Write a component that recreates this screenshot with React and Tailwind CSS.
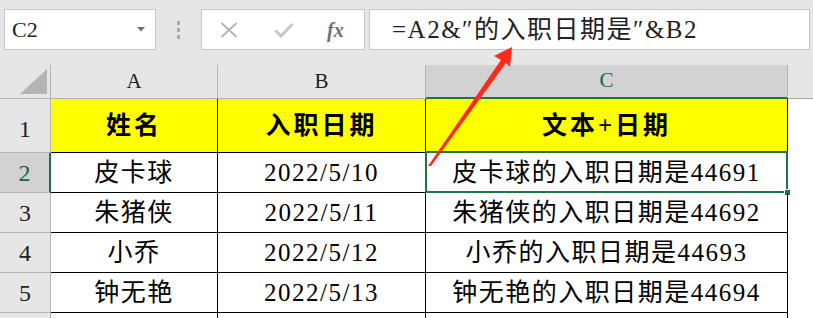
import React from 'react';

const serif = "font-[family-name:'Liberation_Serif','Noto_Sans_CJK_SC',serif]";

const rows = [
  { n: '2', name: '皮卡球', date: '2022/5/10', text: '皮卡球的入职日期是44691', active: true },
  { n: '3', name: '朱猪侠', date: '2022/5/11', text: '朱猪侠的入职日期是44692' },
  { n: '4', name: '小乔', date: '2022/5/12', text: '小乔的入职日期是44693' },
  { n: '5', name: '钟无艳', date: '2022/5/13', text: '钟无艳的入职日期是44694' },
];

const FormulaBar = () => (
  <div className="h-[65px] flex items-start pt-[9px] bg-[#e6e6e6]">
    {/* Name box */}
    <div className="ml-[4px] w-[152px] h-[41px] bg-white border border-[#c6c6c6] flex items-center justify-between pl-[7px] pr-[10px]">
      <span className="text-[22px] text-[#222] leading-none">C2</span>
      <svg width="8" height="5" viewBox="0 0 8 5">
        <path d="M0 0h8L4 4.5z" fill="#707070" />
      </svg>
    </div>
    {/* grip dots */}
    <div className="w-[45px] h-[41px] flex flex-col items-center justify-center gap-[3px]">
      <span className="w-[3px] h-[4px] bg-[#ababab]" />
      <span className="w-[3px] h-[4px] bg-[#ababab]" />
      <span className="w-[3px] h-[4px] bg-[#ababab]" />
    </div>
    {/* cancel / enter / fx */}
    <div className="w-[164px] h-[41px] bg-white border border-[#c6c6c6] flex items-center">
      <svg className="ml-[18px]" width="18" height="16" viewBox="0 0 18 16">
        <path d="M1.5 1L16.5 15M16.5 1L1.5 15" stroke="#b4b4b4" strokeWidth="1.8" />
      </svg>
      <svg className="ml-[36px]" width="20" height="16" viewBox="0 0 20 16">
        <path d="M1.5 8.5L7 14L18.5 2" stroke="#c8c8c8" strokeWidth="3" fill="none" />
      </svg>
      <span className="ml-[33px] italic font-bold text-[20px] text-[#707070] leading-none">fx</span>
    </div>
    {/* formula */}
    <div className="ml-[4px] w-[441px] h-[41px] bg-white border border-[#c6c6c6] flex items-center pl-[22px]">
      <span className="text-[25px] tracking-[1.5px] text-[#222] leading-none">=A2&amp;″的入职日期是″&amp;B2</span>
    </div>
  </div>
);

const App = () => (
  <div className={`relative w-[813px] h-[318px] overflow-hidden bg-white ${serif}`}>
    <FormulaBar />

    {/* column headers */}
    <div className="flex h-[34px] bg-[#e6e6e6]">
      <div className="w-[51px] border-r border-b border-[#b4b4b4] relative">
        <svg className="absolute right-[3px] bottom-[4px]" width="27" height="25" viewBox="0 0 27 25">
          <path d="M27 0V25H0z" fill="#b4b4b4" />
        </svg>
      </div>
      <div className="w-[167px] border-r border-b border-[#b4b4b4] flex items-center justify-center text-[21px] text-[#222]">A</div>
      <div className="w-[208px] border-r border-b border-[#b4b4b4] flex items-center justify-center text-[21px] text-[#222]">B</div>
      <div className="w-[362px] bg-[#d2d2d2] border-r border-[#b4b4b4] border-b-2 border-b-[#217346] flex items-center justify-center text-[21px] text-[#1f5f52]">C</div>
      <div className="flex-1 border-b border-[#a6a6a6]" />
    </div>

    {/* row 1: headers */}
    <div className="flex h-[54px]">
      <div className="w-[51px] bg-[#e6e6e6] border-r border-b border-[#b4b4b4] flex items-end justify-center pb-[5px] text-[24px] text-[#222]">1</div>
      <div className="w-[167px] bg-[#ffff00] border-r border-b border-black flex items-center justify-center text-[25px] font-bold tracking-[3px] text-black">姓名</div>
      <div className="w-[208px] bg-[#ffff00] border-r border-b border-black flex items-center justify-center text-[25px] font-bold tracking-[3px] text-black">入职日期</div>
      <div className="w-[362px] bg-[#ffff00] border-r border-black flex items-center justify-center text-[25px] font-bold tracking-[3px] text-black">文本+日期</div>
      <div className="flex-1" />
    </div>

    {rows.map((r) => (
      <div key={r.n} className="flex h-[40px]">
        <div
          className={
            r.active
              ? 'w-[51px] bg-[#d2d2d2] border-r-2 border-r-[#217346] border-b border-b-[#b4b4b4] flex items-center justify-center text-[24px] text-[#1f5f52]'
              : 'w-[51px] bg-[#e6e6e6] border-r border-b border-[#b4b4b4] flex items-center justify-center text-[24px] text-[#222]'
          }
        >
          {r.n}
        </div>
        <div className="w-[167px] border-r border-b border-black flex items-center justify-center text-[25px] tracking-[1.5px] text-black">{r.name}</div>
        <div className="w-[208px] border-r border-b border-black flex items-center justify-center text-[25px] tracking-[1.5px] text-black">{r.date}</div>
        <div className="relative w-[362px] border-r border-b border-black flex items-center justify-center text-[25px] tracking-[1.5px] text-black whitespace-nowrap">
          {r.text}
          {r.active && (
            <div className="absolute -left-[1px] -top-[2px] -right-[1px] -bottom-[1px] border-2 border-[#217346]">
              <span className="absolute -right-[5px] -bottom-[5px] w-[7px] h-[7px] bg-[#217346] border border-white" />
            </div>
          )}
        </div>
        <div className="flex-1" />
      </div>
    ))}
    <div className="flex h-[5px]">
      <div className="w-[51px] bg-[#e6e6e6] border-r border-[#b4b4b4]" />
      <div className="w-[167px] border-r border-black" />
      <div className="w-[208px] border-r border-black" />
      <div className="w-[362px] border-r border-black" />
    </div>

    {/* red arrow callout */}
    <svg className="absolute left-0 top-0 pointer-events-none" width="813" height="318">
      <polygon points="512,47 494,56 501,60 428,166 431,166 506,63 510,67" fill="#ff2a1a" />
    </svg>
  </div>
);

export default App;
